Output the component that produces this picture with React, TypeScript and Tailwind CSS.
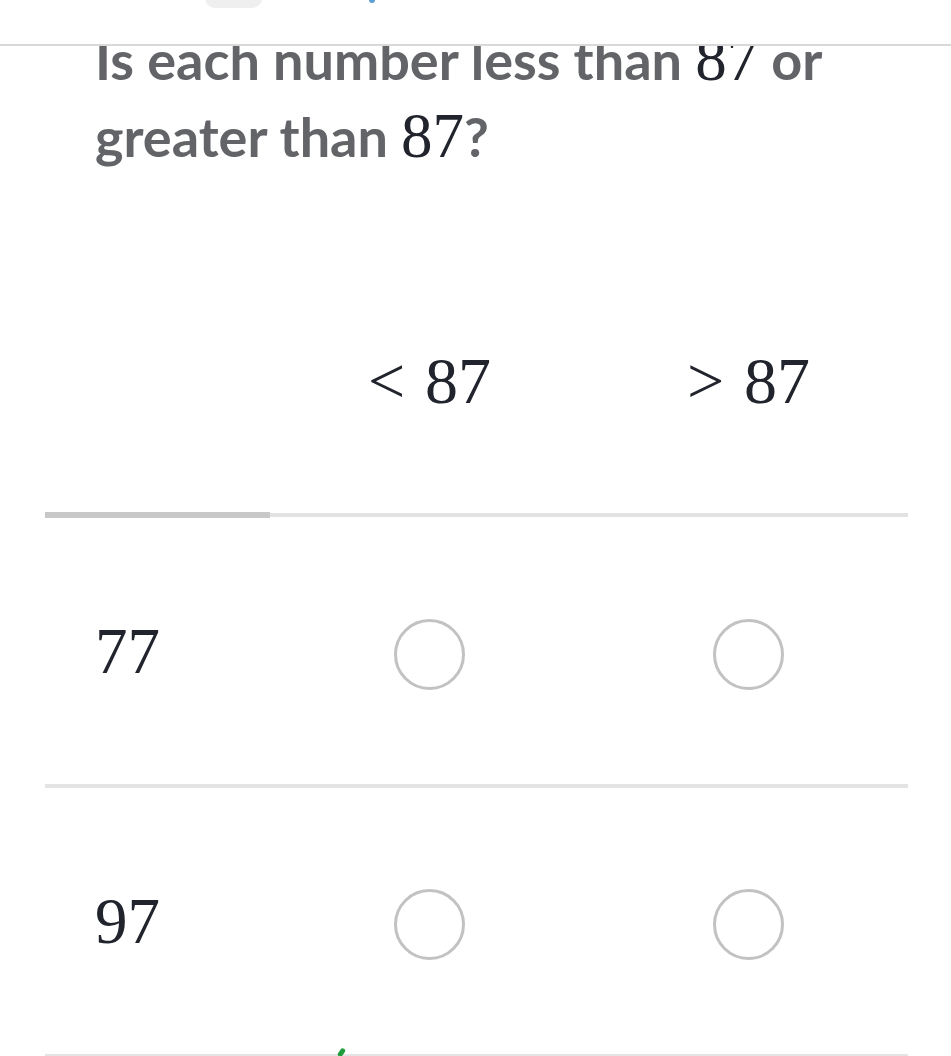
import type { ReactNode } from "react";

const serif = "font-['Liberation_Serif','Times_New_Roman',serif]";

function MathText({ children, className = "" }: { children: ReactNode; className?: string }) {
  return <span className={`${serif} font-normal text-[#21242c] ${className}`}>{children}</span>;
}

function Radio() {
  return (
    <button
      type="button"
      aria-label="choice"
      className="mt-[6px] h-[71px] w-[71px] rounded-full border-[3px] border-[#c2c2c2] bg-white"
    />
  );
}

const rows = ["77", "97"];

export default function App() {
  return (
    <div className="relative min-h-[1056px] overflow-hidden bg-white font-['Lato','Noto_Sans',sans-serif]">
      {/* top bar, mostly scrolled out of view */}
      <header className="relative z-10 h-[46px] border-b-[2px] border-[#d9d9d9] bg-white">
        <div className="absolute -top-[22px] left-[205px] h-[30px] w-[57px] rounded-[10px] bg-[#efefef]" />
        <div className="absolute -top-[4px] left-[369px] h-[7px] w-[6px] rounded-full bg-[#5a9fd6]" />
      </header>

      <main className="-mt-[25px] px-[45px]">
        <h1 className="max-w-[810px] pl-[50px] text-[54px] font-bold leading-[76px] text-[#626467]">
          Is each number less than <MathText className="text-[63px]">87</MathText> or greater than{" "}
          <MathText className="text-[63px]">87</MathText>?
        </h1>

        <section className="mt-[74px] w-[863px]">
          <div className="grid h-[263px] grid-cols-[225px_1fr_1fr] items-center">
            <div />
            <div className="flex items-center justify-center">
              <MathText className="text-[66px] leading-none">&lt;</MathText>
              <MathText className="ml-[20px] text-[66px] leading-none">87</MathText>
            </div>
            <div className="flex items-center justify-center">
              <MathText className="text-[66px] leading-none">&gt;</MathText>
              <MathText className="ml-[20px] text-[66px] leading-none">87</MathText>
            </div>
          </div>
          <div className="flex items-center">
            <div className="h-[6px] w-[225px] bg-[#c8c8c8]" />
            <div className="h-[4px] flex-1 bg-[#e2e2e2]" />
          </div>

          {rows.map((value) => (
            <div key={value}>
              <div className="grid h-[266px] grid-cols-[225px_1fr_1fr] items-center">
                <div className="pl-[50px]">
                  <MathText className="text-[65px] leading-none">{value}</MathText>
                </div>
                <div className="flex justify-center">
                  <Radio />
                </div>
                <div className="flex justify-center">
                  <Radio />
                </div>
              </div>
              <div className="relative h-[4px] bg-[#e4e4e4]">
                {value === "97" ? (
                  <div className="absolute -top-[6px] left-[294px] h-[9px] w-[5px] rotate-[35deg] rounded-sm bg-[#1f9d3a]" />
                ) : null}
              </div>
            </div>
          ))}
        </section>
      </main>
    </div>
  );
}
